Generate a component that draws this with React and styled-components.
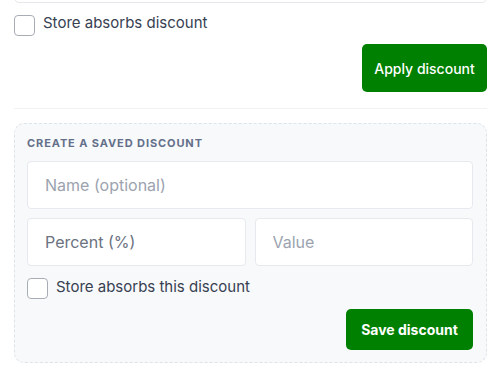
import React from 'react'
import styled, { createGlobalStyle } from 'styled-components'

const GlobalStyle = createGlobalStyle`
    html, body {
        margin: 0;
        padding: 0;
        background: #ffffff;
        font-family: 'Inter', 'Noto Sans', sans-serif;
        overflow: hidden;
    }
    * {
        box-sizing: border-box;
    }
`

const App = () => {
    return (
        <>
            <GlobalStyle />
            <Panel>
                <TopField placeholder="" />

                <CheckRow>
                    <Box type="checkbox" />
                    <span>Store absorbs discount</span>
                </CheckRow>

                <Actions>
                    <GreenButton $big>Apply discount</GreenButton>
                </Actions>

                <Divider />

                <SavedCard>
                    <Heading>Create a saved discount</Heading>
                    <Field placeholder="Name (optional)" />
                    <FieldRow>
                        <Field placeholder="Percent (%)" $dark />
                        <Field placeholder="Value" />
                    </FieldRow>
                    <CheckRow $tight>
                        <Box type="checkbox" />
                        <span>Store absorbs this discount</span>
                    </CheckRow>
                    <Actions $tight>
                        <GreenButton>Save discount</GreenButton>
                    </Actions>
                </SavedCard>
            </Panel>
        </>
    )
}

const Panel = styled.div`
    width: 502px;
    height: 376px;
    padding: 0 15px 0 14px;
    display: flex;
    flex-direction: column;
`

const TopField = styled.input`
    width: 100%;
    height: 44px;
    margin-top: -41px;
    border: 1px solid #e6e8eb;
    border-radius: 5px;
    background: #fff;
    flex-shrink: 0;
`

const CheckRow = styled.label`
    display: flex;
    align-items: center;
    gap: 8px;
    margin-top: 12px;
    font-size: 15px;
    color: #374151;
    height: 21px;

    span {
        position: relative;
        top: ${p => p.$tight ? '-2px' : '-3px'};
    }
`

const Box = styled.input`
    appearance: none;
    margin: 0;
    width: 21px;
    height: 21px;
    border: 1px solid #a8adb5;
    border-radius: 4px;
    background: #fff;
    flex-shrink: 0;
`

const Actions = styled.div`
    display: flex;
    justify-content: flex-end;
    margin-top: ${p => p.$tight ? '10px' : '8px'};
`

const GreenButton = styled.button`
    background: #008000;
    color: #fff;
    border: none;
    border-radius: 5px;
    font-family: 'Inter', sans-serif;
    font-size: 14px;
    font-weight: ${p => p.$big ? 500 : 700};
    height: ${p => p.$big ? '48px' : '41px'};
    width: ${p => p.$big ? '125px' : '127px'};
    padding: 0;
`

const Divider = styled.div`
    height: 1px;
    background: #f1f2f4;
    margin-top: 16px;
`

const SavedCard = styled.div`
    margin-top: 14px;
    background: #f8f9fb;
    border: 1px dashed #dde3ea;
    border-radius: 10px;
    padding: 12px 13px 12px 12px;
    display: flex;
    flex-direction: column;
`

const Heading = styled.div`
    font-size: 11px;
    font-weight: 700;
    letter-spacing: 0.9px;
    text-transform: uppercase;
    color: #64708a;
    line-height: 15px;
    margin-bottom: 10px;
`

const FieldRow = styled.div`
    display: grid;
    grid-template-columns: 1fr 1fr;
    gap: 9px;
    margin-top: 9px;
`

const Field = styled.input`
    width: 100%;
    height: 48px;
    border: 1px solid #e6e9ee;
    border-radius: 4px;
    background: #fff;
    padding: 0 17px;
    font-family: 'Inter', sans-serif;
    font-size: 16px;

    &::placeholder {
        color: ${p => p.$dark ? '#6b7280' : '#9ca3af'};
    }
`

export default App
